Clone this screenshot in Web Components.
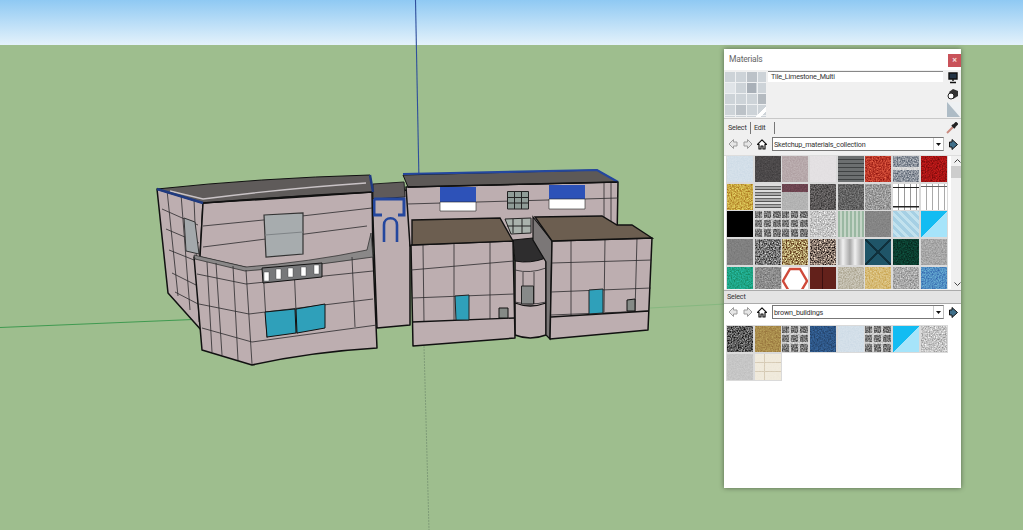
<!DOCTYPE html>
<html lang="en">
<head>
<meta charset="utf-8">
<title>Materials</title>
<style>
  html, body { margin: 0; height: 100%; overflow: hidden; background: #9ebe8e; }
</style>
</head>
<body>
<sk-viewport>
  <sk-model></sk-model>
  <sk-materials></sk-materials>
</sk-viewport>

<script>
// Scene background, the model and the floating window sit on it
class SkViewport extends HTMLElement {
  constructor() {
    super();
    this.attachShadow( {mode: 'open'} ).innerHTML = `
      <style>
        :host {
          display: grid;
          grid-template-rows: 45px 1fr;
          height: 530px;
          position: relative;
          width: 1023px;
        }
        .sky { background: linear-gradient( #8fc9f3, #e4f2fb ); }
        .ground { background: #9ebe8e; }
      </style>
      <div class="sky"></div>
      <div class="ground"></div>
      <slot></slot>
    `;
  }
}

class SkModel extends HTMLElement {
  constructor() {
    super();
    const wall = '#bdaeb0';
    this.attachShadow( {mode: 'open'} ).innerHTML = `
      <style>
        :host { display: block; height: 530px; left: 0; position: absolute; top: 0; width: 1023px; }
        svg { display: block; }
        .w { fill: ${wall}; stroke: #111; stroke-width: 1.5; stroke-linejoin: round; }
        .g { fill: none; stroke: #2b2a2c; stroke-width: .8; }
        .e { fill: none; stroke: #111; stroke-width: 1.3; }
      </style>
      <svg width="1023" height="530" viewBox="0 0 1023 530">
        <!-- axes -->
        <path d="M0 327.500L205 319" stroke="#3f9a50" stroke-width="1" fill="none"/>
        <path d="M650 308L725 304" stroke="#86b880" stroke-width="1" fill="none"/>
        <path d="M415.500 0L419 182" stroke="#2f4f9c" stroke-width="1.100" fill="none"/>
        <path d="M424 346L429 530" stroke="#7f9c78" stroke-width="1" stroke-dasharray="2 1" fill="none"/>

        <!-- left wing -->
        <path class="w" d="M157 189L203 203L200 257L202 331L168 293Z"/>
        <path class="g" d="M162 209L198 225M166 229L199 243M169 250L199 262M172 273L200 287M175 292L200 305M167 190L178 296M181 194L190 310M194 199L199 322"/>
        <path d="M184 218L195 222L199 254L186 251Z" fill="#a3a8ab" stroke="#333" stroke-width="1"/>

        <!-- middle connector -->
        <path class="w" d="M372 192L410 190V325L377 328Z"/>
        <path d="M373 184L404 182L405 197L373 199Z" fill="#5f5a5a" stroke="#222"/>
        <path d="M374 199H404V215H398M374 199V215H382" fill="none" stroke="#24479e" stroke-width="3"/>
        <path d="M384 242V225C384 216 397 216 397 225V242" fill="none" stroke="#24479e" stroke-width="2.600"/>

        <!-- upper front wall behind lower block -->
        <path class="w" d="M203 203Q290 198 372 192L373 256L248 268L200 257Z"/>
        <path class="g" d="M203 226Q290 218 372 208M203 247Q290 236 367 226"/>
        <path d="M264 215L303 213V254L266 257Z" fill="#a7acae" stroke="#333" stroke-width="1.200"/>
        <path d="M265 235L303 232" stroke="#7f8487" stroke-width="1"/>

        <!-- left roof -->
        <path d="M157 189Q260 178 370 175L373 192Q290 196 203 203Z" fill="#5f5b5a" stroke="#111" stroke-width="1"/>
        <path d="M170 191L203 199Q290 188 366 183" fill="none" stroke="#c9c3c6" stroke-width="1.300"/>
        <path d="M203 203Q290 196 373 192" fill="none" stroke="#111" stroke-width="1.500"/>
        <path d="M157 189L203 203M370 175L373 192" fill="none" stroke="#1f3a80" stroke-width="2.400"/>

        <!-- lower front block -->
        <path class="w" d="M194 257L245 268Q310 264 373 255L377 348Q310 352 252 365L202 350Z"/>
        <path d="M194 255L246 267Q310 262 367 250L371 233L373 257Q310 267 245 271L195 259Z" fill="#8a8888" stroke="#333" stroke-width=".8"/>
        <path class="g" d="M197 274L246 284L373 271M199 304L249 314L373 299M202 328L252 342L377 325M207 262L212 352M216 263L222 355M233 266L238 360M246 270L252 364M263 268L267 338M294 266L297 334M352 257L355 327"/>
        <path d="M262 268L322 263V277L263 283Z" fill="#77787a" stroke="#111" stroke-width="1"/>
        <path d="M264 272H269V281H264ZM276 269H281V279H276ZM288 268H293V277H288ZM301 267H306V276H301ZM314 265H319V274H314Z" fill="#fff" stroke="#333" stroke-width=".4"/>
        <path d="M265 312L295 309L296 333L267 337Z" fill="#2fa0ba" stroke="#111" stroke-width="1"/>
        <path d="M296 309L325 304V328L297 333Z" fill="#2fa0ba" stroke="#111" stroke-width="1"/>

        <!-- right back wall and roof -->
        <path class="w" d="M406 187L618 182L617 240L410 246Z"/>
        <path class="g" d="M407 204L618 198M604 182V226M611 182V226"/>
        <path d="M403 175L597 170L618 182L408 187Z" fill="#5d5957" stroke="#111"/>
        <path d="M403 174L597 170L618 182" fill="none" stroke="#24479e" stroke-width="2.200"/>
        <path d="M408 187L618 182" stroke="#111" stroke-width="1.500"/>
        <path d="M440 187H476V202H440Z" fill="#2d52b8"/>
        <path d="M440 202H476V211H440Z" fill="#fff" stroke="#222" stroke-width=".6"/>
        <path d="M549 185H585V199H549Z" fill="#2d52b8"/>
        <path d="M549 199H585V209H549Z" fill="#fff" stroke="#222" stroke-width=".6"/>
        <path d="M507.500 191.500H528.500V209H507.500ZM514.500 191.500V209M521.500 191.500V209M507.500 197.500H528.500M507.500 203H528.500" fill="#8f9c97" stroke="#222" stroke-width="1"/>
        <path d="M505 219L531 218V233L511 234ZM513 219V233M522 219V233M507 226H531" fill="#a9b2ac" stroke="#222" stroke-width="1"/>

        <!-- central bay -->
        <path class="w" d="M515 258L546 258V335Q530 341 515 335Z"/>
        <path d="M513 240L533 238L546 258Q530 264 515 261Z" fill="#2e2d2e" stroke="#111"/>
        <path class="g" d="M515 270Q530 274 546 268M515 302Q530 306 546 302M523 272V304M534 272V304"/>
        <path class="e" d="M515 303Q530 309 546 303"/>
        <path d="M521.500 286H533.500V304H521.500Z" fill="#878a89" stroke="#222" stroke-width="1"/>

        <!-- left block -->
        <path class="w" d="M411 245L513 241L515 338L413 346Z"/>
        <path class="g" d="M411 270L514 261M412 298L514 294M423 245L424 322M454 244V320M490 242V319"/>
        <path class="e" d="M412 322L515 318"/>
        <path d="M412 220L500 218L513 241L412 245Z" fill="#6c5e50" stroke="#111" stroke-width="1.400"/>
        <path d="M455 296L469 295V320H456Z" fill="#2fa0ba" stroke="#222"/>
        <path d="M499 308H508V318H499Z" fill="#858a86" stroke="#111"/>

        <!-- right block -->
        <path d="M533 217L552 241L550 339L546 335V262L533 240Z" fill="#7b7777" stroke="#111" stroke-width="1.200"/>
        <path class="w" d="M552 241L652 238L648 330L550 339Z"/>
        <path class="g" d="M552 263L652 260M551 292L651 288M551 315L649 311M571 240V316M605 239L604 312M637 238L635 312"/>
        <path class="e" d="M551 317L649 311"/>
        <path d="M535 217L602 216L617 225H632L652 238L552 241Z" fill="#6c5e50" stroke="#111" stroke-width="1.400"/>
        <path d="M589 290L603 289V313L589 314Z" fill="#2fa0ba" stroke="#222"/>
        <path d="M627 300L635 299V311H627Z" fill="#858a86" stroke="#111"/>
      </svg>
    `;
  }
}

// Texture thumbnails: a css background, plus grain for the speckled ones
const TEXTURES = {
  ice: ['#d3dfe9', .15],
  charcoal: ['#4b4849', .2],
  mauve: ['#b7a9ab', .15],
  pale: ['#e4e1e3', .1],
  siding: ['repeating-linear-gradient( #6c6f70 0 3px, #3f4243 3px 4px )', 0],
  brick: ['#bd3a2a', .8],
  stone2: ['linear-gradient( #d8d8d8 0 0 ) 0 11px/100% 3px no-repeat, #8b929c', .6],
  redcarpet: ['#a81414', .6],
  gold: ['#c9a741', .7],
  greybrick: ['repeating-linear-gradient( #ddd 0 2px, #666 2px 3px, #aaa 3px 5px, #555 5px 6px )', 0],
  roofred: ['linear-gradient( #6d4450 0 8px, #b3b3b3 8px )', .15],
  darkgrain: ['#5a5757', .5],
  slate: ['#636363', .4],
  grain: ['#999', .5],
  fence: ['linear-gradient( #222 0 0 ) 0 3px/100% 1px no-repeat, linear-gradient( #222 0 0 ) 0 22px/100% 1.500px no-repeat, repeating-linear-gradient( 90deg, #fff 0 5px, #999 5px 6px )', 0],
  fence2: ['linear-gradient( #666 0 0 ) 0 2px/100% 1px no-repeat, repeating-linear-gradient( 90deg, #fff 0 5px, #aaa 5px 6px )', 0],
  black: ['#000', 0],
  blocks: ['linear-gradient( #ccc 0 0 ) 7px 0/2px 100% no-repeat, linear-gradient( #ccc 0 0 ) 16px 0/2px 100% no-repeat, linear-gradient( #ccc 0 0 ) 0 7px/100% 2px no-repeat, linear-gradient( #ccc 0 0 ) 0 16px/100% 2px no-repeat, #767676', .6],
  speckle: ['#c4c4c4', 1],
  greenstripe: ['repeating-linear-gradient( 90deg, #9ab8a2 0 2px, #c4d4c6 2px 4px )', 0],
  midgrey: ['#868686', .1],
  lattice: ['repeating-linear-gradient( 45deg, #a6d0e4 0 3px, #c2e2ee 3px 6px )', 0],
  split: ['linear-gradient( 135deg, #12bcf2 50%, #a6e4fa 50% )', 0],
  grey: ['#818181', .1],
  gravel: ['#777', .9],
  pebble: ['#a48e5e', 1.200],
  pebble2: ['#84746a', 1.200],
  metal: ['repeating-linear-gradient( 90deg, #a8a8a8, #f0f0f0 5px, #a8a8a8 12px )', 0],
  tealplate: ['linear-gradient( 45deg, transparent 48%, #10303c 48% 52%, transparent 52% ), linear-gradient( -45deg, transparent 48%, #10303c 48% 52%, transparent 52% ), #1f5568', 0],
  forest: ['#0a3c2e', .5],
  lightgrain: ['#a6a6a6', .3],
  jade: ['#1ea586', .35],
  midgrain: ['#8c8c8c', .35],
  hex: ['#fff', 0],
  maroon: ['linear-gradient( #3c1010 0 0 ) 12px 0/1px 100% no-repeat, #63211b', 0],
  flagstone: ['#bfbaaa', .4],
  sand: ['#d6ba74', .4],
  granite: ['#a9a9a9', .6],
  bluewater: ['#5290c4', .4],
  darkspeck: ['#5c5c5c', 1],
  tan: ['#a98c4c', .25],
  navy: ['#2d5585', .3],
  concrete: ['#c6c6c6', .15],
  cream: ['linear-gradient( #d8cdb8 0 0 ) 0 8px/100% 1px no-repeat, linear-gradient( #d8cdb8 0 0 ) 0 17px/100% 1px no-repeat, linear-gradient( #d8cdb8 0 0 ) 9px 0/1px 100% no-repeat, #f0eadc', .1]
};

class SkSwatch extends HTMLElement {
  constructor() {
    super();
    this.attachShadow( {mode: 'open'} ).innerHTML = `
      <style>
        :host { display: block; height: 26px; width: 26px; }
        .tile { box-shadow: 0 0 0 1px #dadada; filter: blur( .4px ); height: 100%; isolation: isolate; position: relative; }
        svg { display: block; height: 100%; left: 0; mix-blend-mode: overlay; position: absolute; top: 0; width: 100%; }
        svg.plain { mix-blend-mode: normal; }
      </style>
      <div class="tile"></div>
    `;
  }

  connectedCallback() {
    const name = this.getAttribute( 'texture' );
    const [background, grain] = TEXTURES[name];
    const $tile = this.shadowRoot.querySelector( '.tile' );

    $tile.style.background = background;

    if( name === 'hex' ) {
      $tile.innerHTML = '<svg class="plain" viewBox="0 0 26 26"><path d="M8 2H18L25 14L18 26H8L1 14Z" fill="none" stroke="#cf4a3a" stroke-width="2.400"/></svg>';
    } else if( grain > 0 ) {
      const gain = ( 1.5 * grain ).toFixed( 2 );
      const offset = ( .5 - .75 * grain ).toFixed( 2 );
      const id = `grain-${name}`;

      $tile.innerHTML = `<svg viewBox="0 0 26 26"><filter id="${id}" x="0" y="0" width="100%" height="100%" color-interpolation-filters="sRGB">
        <feTurbulence type="fractalNoise" baseFrequency=".7" numOctaves="2" seed="${name.length}"/>
        <feColorMatrix values="${gain} 0 0 0 ${offset} ${gain} 0 0 0 ${offset} ${gain} 0 0 0 ${offset} 0 0 0 0 1"/>
      </filter><rect width="26" height="26" filter="url(#${id})"/></svg>`;
    }
  }
}

// Back, forward, home, library dropdown and details arrow
class SkNavRow extends HTMLElement {
  constructor() {
    super();
    this.attachShadow( {mode: 'open'} ).innerHTML = `
      <style>
        :host { align-items: center; display: flex; height: 16px; padding: 0 3px 0 4px; }
        svg { display: block; flex: none; }
        .arrows { display: flex; gap: 5px; margin-right: 4px; }
        .home { margin-right: 5px; }
        .field {
          align-items: center;
          background: #fff;
          border: 1px solid #777;
          border-right-color: #bbb;
          box-sizing: border-box;
          color: #333;
          display: flex;
          flex: none;
          height: 14px;
          justify-content: space-between;
          padding: 0 0 0 1px;
          width: 172px;
        }
        .drop { align-items: center; border-left: 1px solid #ccc; display: flex; height: 12px; justify-content: center; width: 9px; }
        .go { margin-left: 5px; }
      </style>
      <div class="arrows">
        <svg width="10" height="12" viewBox="0 0 10 12"><path d="M5.500 1.500L1 6L5.500 10.500V8H9V4H5.500Z" fill="#e6e6e6" stroke="#9c9c9c"/></svg>
        <svg width="10" height="12" viewBox="0 0 10 12"><path d="M4.500 1.500L9 6L4.500 10.500V8H1V4H4.500Z" fill="#e6e6e6" stroke="#9c9c9c"/></svg>
      </div>
      <svg class="home" width="10" height="11" viewBox="0 0 10 11"><path d="M5 .800L.500 5.300H2V10H4V7H6V10H8V5.300H9.500Z" fill="#fff" stroke="#111" stroke-width="1.200" stroke-linejoin="round"/></svg>
      <div class="field">
        <slot></slot>
        <div class="drop"><svg width="5" height="3" viewBox="0 0 5 3"><path d="M0 0H5L2.500 3Z" fill="#111"/></svg></div>
      </div>
      <svg class="go" width="9" height="11" viewBox="0 0 9 11"><path d="M3 .500L8.500 5.500L3 10.500V8H.500V3H3Z" fill="#3f6f8a" stroke="#111"/></svg>
    `;
  }
}

class SkMaterials extends HTMLElement {
  constructor() {
    super();
    const library = [
      'ice', 'charcoal', 'mauve', 'pale', 'siding', 'brick', 'stone2', 'redcarpet',
      'gold', 'greybrick', 'roofred', 'darkgrain', 'slate', 'grain', 'fence', 'fence2',
      'black', 'blocks', 'blocks', 'speckle', 'greenstripe', 'midgrey', 'lattice', 'split',
      'grey', 'gravel', 'pebble', 'pebble2', 'metal', 'tealplate', 'forest', 'lightgrain',
      'jade', 'midgrain', 'hex', 'maroon', 'flagstone', 'sand', 'granite', 'bluewater'
    ];
    const used = [ 'darkspeck', 'tan', 'blocks', 'navy', 'ice', 'blocks', 'split', 'speckle', 'concrete', 'cream' ];
    const swatches = names => names.map( name => `<sk-swatch texture="${name}"></sk-swatch>` ).join( '' );

    this.attachShadow( {mode: 'open'} ).innerHTML = `
      <style>
        :host {
          background: #f0f0f0;
          box-shadow: 0 0 5px rgba( 0, 0, 0, .45 );
          color: #333;
          display: flex;
          flex-direction: column;
          font-family: Roboto, "Noto Sans", sans-serif;
          font-size: 7.200px;
          height: 439px;
          left: 724px;
          letter-spacing: -.2px;
          position: absolute;
          top: 49px;
          width: 237px;
        }
        .title { background: #fff; color: #666; display: flex; flex: none; font-size: 8.500px; height: 21px; justify-content: space-between; line-height: 21px; padding-left: 5px; }
        .close { align-items: center; background: #c9525a; color: #f2d4d4; display: flex; font-size: 9px; font-weight: bold; height: 13px; justify-content: center; margin-top: 5px; width: 13px; }
        .preview { border-bottom: 1px solid #c8c8c8; box-sizing: border-box; display: flex; flex: none; height: 49px; padding: 2px 0 0 1px; }
        .thumb {
          background:
            linear-gradient( 135deg, transparent 88%, #fff 88% 94%, transparent 94% ),
            repeating-linear-gradient( 90deg, transparent 0 10px, #eef0f2 10px 11px ),
            repeating-linear-gradient( transparent 0 10px, #eef0f2 10px 11px ),
            linear-gradient( #a9b0b8 0 0 ) 21px 11px/10px 10px no-repeat,
            linear-gradient( #b4bac0 0 0 ) 32px 22px/10px 10px no-repeat,
            linear-gradient( #bcc2c8 0 0 ) 11px 33px/10px 10px no-repeat,
            linear-gradient( #bcc2c8 0 0 ) 22px 0/10px 10px no-repeat,
            linear-gradient( #e0e4e8 0 0 ) 0 11px/10px 10px no-repeat,
            #cdd3d8;
          filter: blur( .4px );
          height: 45px;
          width: 41px;
        }
        .name { background: #fff; border-top: 1px solid #888; box-sizing: border-box; flex: none; height: 11px; line-height: 10px; margin: -1px 0 0 2px; padding-left: 3px; width: 175px; }
        .side { display: flex; flex-direction: column; margin: 0 1px 0 auto; width: 13px; }
        .side svg { display: block; flex: none; }
        .tabs { align-items: center; display: flex; flex: none; height: 17px; justify-content: space-between; padding: 0 3px 0 3px; }
        .labels { display: flex; }
        .tab { border-right: 1px solid #777; box-sizing: border-box; height: 12px; line-height: 12px; padding-left: 1px; width: 24px; }
        .tab + .tab { padding-left: 3px; }
        .grid { background: #fff; border-top: 1px solid #ddd; box-sizing: border-box; display: flex; flex: none; height: 134px; margin-top: 3px; overflow: hidden; }
        .swatches { display: grid; flex: none; gap: 1.700px; grid-template-columns: repeat( 8, 26px ); padding: 0 0 0 3px; width: 224px; }
        .bar { align-items: center; background: #f0f0f0; display: flex; flex: none; flex-direction: column; height: 133px; justify-content: space-between; margin-left: auto; width: 12px; }
        .thumbbar { background: #cdcdcd; height: 12px; margin-bottom: auto; margin-top: 3px; width: 100%; }
        .bar svg { display: block; margin-top: 3px; }
        .bar svg:last-child { margin-bottom: 3px; margin-top: 0; }
        .sep { background: #e4e4e4; border-bottom: 1px solid #ababab; border-top: 1px solid #ababab; box-sizing: border-box; flex: none; height: 14px; line-height: 12px; margin-top: 1px; padding-left: 3px; }
        .used { background: #fff; flex: 1; min-height: 0; }
        .used .swatches { grid-auto-rows: 26px; padding-top: 6px; }
        sk-nav-row { flex: none; }
        .second { background: #fff; }
      </style>
      <div class="title"><span>Materials</span><div class="close">×</div></div>
      <div class="preview">
        <div class="thumb"></div>
        <div class="name">Tile_Limestone_Multi</div>
        <div class="side">
          <svg width="12" height="12" viewBox="0 0 12 12" style="margin-bottom: 4px"><path d="M2 1H10V7H2ZM6 7V9M3 10.500H9" fill="#234" stroke="#111" stroke-width="1.400"/></svg>
          <svg width="12" height="12" viewBox="0 0 12 12" style="margin-bottom: 2px"><path d="M2 4L6 1L11 3V8L6 11Z" fill="#333"/><circle cx="4" cy="8" r="3" fill="#fff" stroke="#222"/></svg>
          <svg width="13" height="15" viewBox="0 0 13 15"><path d="M0 0H13V15Z" fill="#eef1f3"/><path d="M0 0V15H13Z" fill="#aebcc6"/></svg>
        </div>
      </div>
      <div class="tabs">
        <div class="labels"><span class="tab">Select</span><span class="tab">Edit</span></div>
        <svg width="12" height="12" viewBox="0 0 12 12"><path d="M1 11L7 5" stroke="#c98a7e" stroke-width="2"/><path d="M6 3L9 6M7 4L10 1L11 2L8 5" stroke="#222" stroke-width="2"/></svg>
      </div>
      <sk-nav-row>Sketchup_materials_collection</sk-nav-row>
      <div class="grid">
        <div class="swatches">${swatches( library )}</div>
        <div class="bar">
          <svg width="7" height="4" viewBox="0 0 7 4"><path d="M.500 3.500L3.500 .500L6.500 3.500" fill="none" stroke="#444"/></svg>
          <div class="thumbbar"></div>
          <svg width="7" height="4" viewBox="0 0 7 4"><path d="M.500 .500L3.500 3.500L6.500 .500" fill="none" stroke="#444"/></svg>
        </div>
      </div>
      <div class="sep">Select</div>
      <sk-nav-row class="second">brown_buildings</sk-nav-row>
      <div class="used"><div class="swatches">${swatches( used )}</div></div>
    `;
  }
}

window.customElements.define( 'sk-viewport', SkViewport );
window.customElements.define( 'sk-model', SkModel );
window.customElements.define( 'sk-swatch', SkSwatch );
window.customElements.define( 'sk-nav-row', SkNavRow );
window.customElements.define( 'sk-materials', SkMaterials );
</script>
</body>
</html>
